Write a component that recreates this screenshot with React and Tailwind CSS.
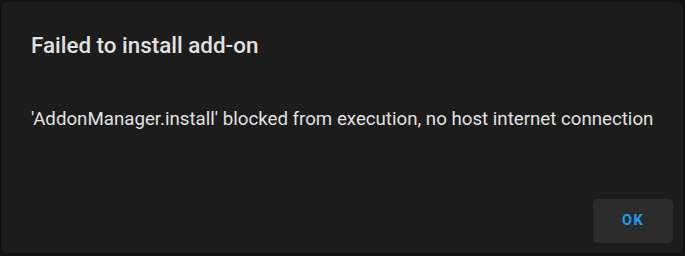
export default function App() {
  return (
    <div className="w-[685px] h-[256px] bg-[#111111] overflow-hidden pt-[2px] pl-[1px]" style={{ fontFamily: "Roboto, 'Liberation Sans', sans-serif" }}>
      <div className="w-[682px] h-[251px] bg-[#1c1c1c] rounded-[6px] flex flex-col">
        <h2 className="pt-[27px] pl-[30px] text-[22.4px] leading-[32px] font-medium text-[#e1e1e1] whitespace-nowrap">
          Failed to install add-on
        </h2>
        <p className="mt-[46px] pl-[30px] text-[18.7px] leading-[24px] text-[#e1e1e1] whitespace-nowrap">
          'AddonManager.install' blocked from execution, no host internet connection
        </p>
        <div className="mt-auto flex justify-end pr-[10px] pb-[10px]">
          <button className="w-[80px] h-[44px] rounded-[5px] bg-[#2b2b2b] text-[#1f9cf0] text-[14.5px] font-bold tracking-[0.1em]">
            OK
          </button>
        </div>
      </div>
    </div>
  );
}
